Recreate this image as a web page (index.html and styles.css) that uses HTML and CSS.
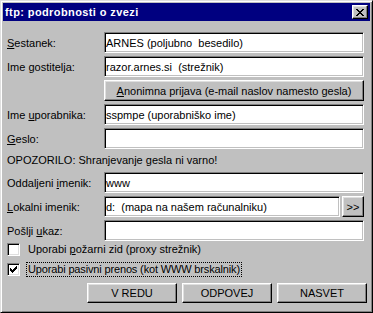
FILE: index.html
```html
<!DOCTYPE html>
<html lang="sl">
<head>
    <meta charset="UTF-8">
    <title>ftp: podrobnosti o zvezi</title>
    <link rel="stylesheet" href="styles.css">
</head>
<body>
<div class="window">
    <div class="titlebar">
        <span class="title">ftp: podrobnosti o zvezi</span>
        <button class="close">
            <svg width="8" height="7" viewBox="0 0 8 7">
                <path d="M0 0h2v1h1v1h2V1h1V0h2v1H7v1H6v1H5v1h1v1h1v1h1v1H6V6H5V5H3v1H2v1H0V6h1V5h1V4h1V3H2V2H1V1H0z" fill="#000"/>
            </svg>
        </button>
    </div>

    <div class="content">
        <div class="row">
            <label><u>S</u>estanek:</label>
            <input class="field" type="text" value="ARNES (poljubno  besedilo)">
        </div>
        <div class="row">
            <label>Ime <u>g</u>ostitelja:</label>
            <input class="field" type="text" value="razor.arnes.si  (strežnik)">
        </div>
        <div class="row">
            <button class="btn wide"><u>A</u>nonimna prijava (e-mail naslov namesto gesla)</button>
        </div>
        <div class="row">
            <label>Ime <u>u</u>porabnika:</label>
            <input class="field" type="text" value="sspmpe (uporabniško ime)">
        </div>
        <div class="row">
            <label><u>G</u>eslo:</label>
            <input class="field" type="password" value="">
        </div>
        <div class="note">OPOZORILO: Shranjevanje gesla ni varno!</div>
        <div class="row">
            <label>Oddaljeni <u>i</u>menik:</label>
            <input class="field" type="text" value="www">
        </div>
        <div class="row">
            <label><u>L</u>okalni imenik:</label>
            <input class="field short" type="text" value="d:  (mapa na našem računalniku)">
            <button class="btn browse">&gt;&gt;</button>
        </div>
        <div class="row">
            <label>Pošlji <u>u</u>kaz:</label>
            <input class="field" type="text" value="">
        </div>

        <div class="checks">
            <div class="check-row">
                <span class="box"></span>
                <span class="check-text">Uporabi <u>p</u>ožarni zid (proxy strežnik)</span>
            </div>
            <div class="check-row">
                <span class="box">
                    <svg width="7" height="7" viewBox="0 0 7 7">
                        <path d="M6 0h1v3H6v1H5v1H4v1H3v1H2V6H1V5H0V2h1v1h1v1h1V3h1V2h1V1h1z" fill="#000"/>
                    </svg>
                </span>
                <span class="check-text focus">Uporabi pasivni prenos (kot WWW brskalnik)</span>
            </div>
        </div>

        <div class="buttons">
            <button class="btn action">V REDU</button>
            <button class="btn action">ODPOVEJ</button>
            <button class="btn action">NASVET</button>
        </div>
    </div>
</div>
</body>
</html>
```

FILE: styles.css
```css
body {
    margin: 0;
    font-family: "Liberation Sans", Arial, sans-serif;
    font-size: 11px;
    color: #000;
}

.window {
    width: 373px;
    height: 313px;
    box-sizing: border-box;
    background-color: #c0c0c0;
    border: 1px solid;
    border-color: #dfdfdf #000 #000 #dfdfdf;
    box-shadow: inset 1px 1px #fff, inset -1px -1px #808080;
    padding: 2px;
}

.titlebar {
    height: 18px;
    background-color: #000080;
    display: flex;
    align-items: center;
    justify-content: space-between;
    padding-left: 2px;
}

.title {
    color: #fff;
    font-weight: bold;
    font-size: 11px;
    letter-spacing: 0.4px;
}

.close {
    width: 16px;
    height: 14px;
    margin-right: 2px;
    padding: 0;
    box-sizing: border-box;
    background-color: #c0c0c0;
    border: 1px solid;
    border-color: #fff #000 #000 #fff;
    box-shadow: inset -1px -1px #808080, inset 1px 1px #dfdfdf;
    display: flex;
    align-items: center;
    justify-content: center;
}

.content {
    padding: 11px 6px 0 4px;
    display: flex;
    flex-direction: column;
    gap: 3px;
}

.row {
    display: flex;
    align-items: center;
    height: 21px;
}

.row label {
    width: 97px;
    flex-shrink: 0;
}

.field {
    width: 260px;
    height: 21px;
    box-sizing: border-box;
    margin: 0;
    padding: 0 1px;
    font: inherit;
    color: #000;
    background-color: #fff;
    border: 1px solid;
    border-color: #808080 #fff #fff #808080;
    box-shadow: inset 1px 1px #000, inset -1px -1px #c0c0c0;
    outline: none;
}

.field.short {
    width: 236px;
}

.btn {
    box-sizing: border-box;
    margin: 0;
    padding: 0;
    font: inherit;
    color: #000;
    background-color: #c0c0c0;
    border: 1px solid;
    border-color: #fff #000 #000 #fff;
    box-shadow: inset -1px -1px #808080, inset 1px 1px #dfdfdf;
}

.wide {
    width: 260px;
    height: 21px;
    margin-left: 97px;
}

.browse {
    width: 22px;
    height: 21px;
    margin-left: 2px;
}

.note {
    height: 17px;
    line-height: 17px;
}

.checks {
    margin-top: -5px;
    display: flex;
    flex-direction: column;
}

.check-row {
    height: 20px;
    display: flex;
    align-items: center;
}

.box {
    width: 13px;
    height: 13px;
    box-sizing: border-box;
    background-color: #fff;
    border: 1px solid;
    border-color: #808080 #fff #fff #808080;
    box-shadow: inset 1px 1px #000, inset -1px -1px #dfdfdf;
    display: flex;
    align-items: center;
    justify-content: center;
}

.check-text {
    margin-left: 6px;
    padding: 0 1px;
    line-height: 13px;
    border: 1px solid transparent;
}

.check-text.focus {
    border: 1px dotted #000;
    letter-spacing: -0.15px;
}

.buttons {
    margin-top: 1px;
    margin-right: -3px;
    display: flex;
    justify-content: flex-end;
    gap: 5px;
}

.action {
    width: 90px;
    height: 20px;
}
```
